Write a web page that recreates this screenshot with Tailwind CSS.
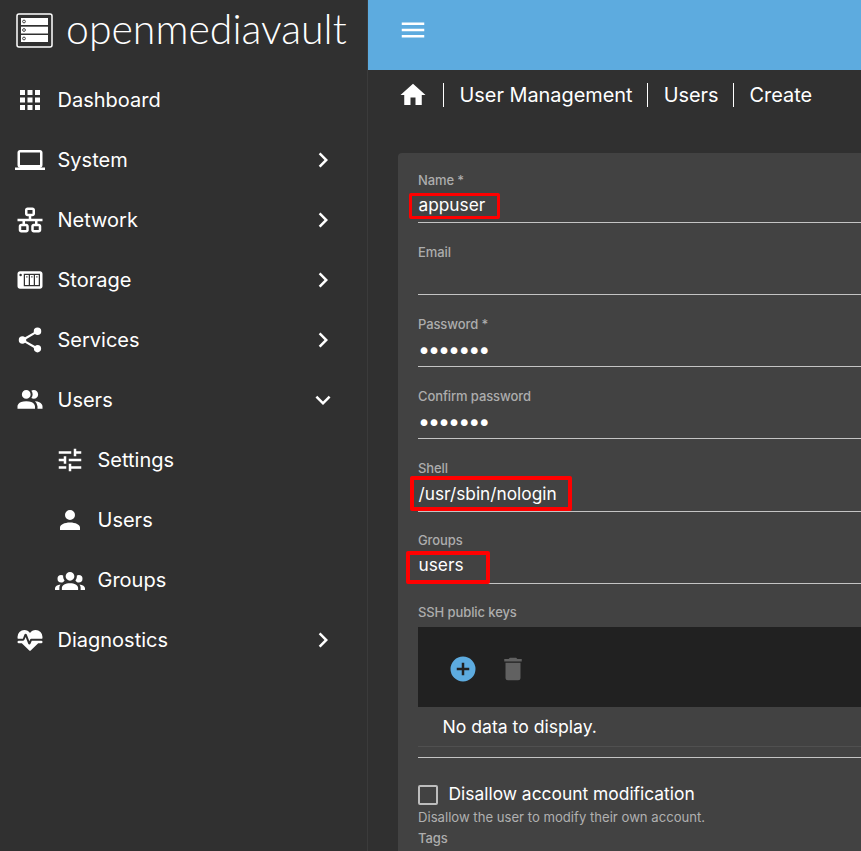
<!DOCTYPE html>
<html lang="en">
<head>
<meta charset="utf-8">
<title>openmediavault</title>
<script src="https://cdn.jsdelivr.net/npm/@tailwindcss/browser@4"></script>
</head>
<body class="bg-[#303030] font-['Inter','Liberation_Sans',sans-serif] text-white">
<div class="flex h-[851px] w-[861px] overflow-hidden">
  <aside class="w-[368px] shrink-0 border-r border-[#3b3b3b] bg-[#303030]">
    <div class="flex h-[70px] items-start pl-[16px] pt-[13px]">
      <svg class="h-[35px] w-[37px] shrink-0" viewBox="0 0 37 35">
        <rect x="1" y="1" width="35" height="33" rx="2" fill="none" stroke="#fff" stroke-width="1.5"/>
        <rect x="5" y="5" width="27" height="7" fill="#fff"/><rect x="5" y="13.7" width="27" height="6.8" fill="#fff"/><rect x="5" y="22" width="27" height="7" fill="#fff"/>
        <circle cx="8" cy="8.5" r="1.4" fill="#fff" stroke="#303030" stroke-width="0.9"/><circle cx="8" cy="17" r="1.4" fill="#fff" stroke="#303030" stroke-width="0.9"/><circle cx="8" cy="25.5" r="1.4" fill="#fff" stroke="#303030" stroke-width="0.9"/>
      </svg>
      <span class="ml-[13px] font-['Lato',sans-serif] text-[41px] font-light leading-[31px]">openmediavault</span>
    </div>
    <nav class="text-[20px]">
      <a class="flex h-[60px] items-center pl-[15px]"><svg class="h-[30px] w-[30px] fill-white" viewBox="0 0 24 24"><path d="M4,8H8V4H4V8M10,20H14V16H10V20M4,20H8V16H4V20M4,14H8V10H4V14M10,14H14V10H10V14M16,4V8H20V4H16M10,8H14V4H10V8M16,14H20V10H16V14M16,20H20V16H16V20Z"/></svg><span class="ml-[12.5px]">Dashboard</span></a>
      <a class="flex h-[60px] items-center pl-[15px] pr-[29px]"><svg class="h-[30px] w-[30px] fill-white" viewBox="0 0 24 24"><path d="M4,6H20V16H4M20,18A2,2 0 0,0 22,16V6C22,4.89 21.1,4 20,4H4C2.89,4 2,4.89 2,6V16A2,2 0 0,0 4,18H0V20H24V18H20Z"/></svg><span class="ml-[12.5px] flex-1">System</span><svg class="h-[30px] w-[30px] fill-white" viewBox="0 0 24 24"><path d="M8.59,16.58L13.17,12L8.59,7.41L10,6L16,12L10,18L8.59,16.58Z"/></svg></a>
      <a class="flex h-[60px] items-center pl-[15px] pr-[29px]"><svg class="h-[30px] w-[30px] fill-white" viewBox="0 0 24 24"><path d="M10,2C8.89,2 8,2.89 8,4V7C8,8.11 8.89,9 10,9H11V11H2V13H6V15H5C3.89,15 3,15.89 3,17V20C3,21.11 3.89,22 5,22H9C10.11,22 11,21.11 11,20V17C11,15.89 10.11,15 9,15H8V13H16V15H15C13.89,15 13,15.89 13,17V20C13,21.11 13.89,22 15,22H19C20.11,22 21,21.11 21,20V17C21,15.89 20.11,15 19,15H18V13H22V11H13V9H14C15.11,9 16,8.11 16,7V4C16,2.89 15.11,2 14,2H10M10,4H14V7H10V4M5,17H9V20H5V17M15,17H19V20H15V17Z"/></svg><span class="ml-[12.5px] flex-1">Network</span><svg class="h-[30px] w-[30px] fill-white" viewBox="0 0 24 24"><path d="M8.59,16.58L13.17,12L8.59,7.41L10,6L16,12L10,18L8.59,16.58Z"/></svg></a>
      <a class="flex h-[60px] items-center pl-[15px] pr-[29px]"><svg class="h-[30px] w-[30px] fill-white" viewBox="0 0 24 24"><path d="M4,5C2.89,5 2,5.89 2,7V17C2,18.11 2.89,19 4,19H20C21.11,19 22,18.11 22,17V7C22,5.89 21.11,5 20,5H4M4.5,7A1,1 0 0,1 5.5,8A1,1 0 0,1 4.5,9A1,1 0 0,1 3.5,8A1,1 0 0,1 4.5,7M7,7H20V17H7V7M8,8V16H11V8H8M9,9H10V10H9V9M12,8V16H15V8H12M13,9H14V10H13V9M16,8V16H19V8H16M17,9H18V10H17V9Z"/></svg><span class="ml-[12.5px] flex-1">Storage</span><svg class="h-[30px] w-[30px] fill-white" viewBox="0 0 24 24"><path d="M8.59,16.58L13.17,12L8.59,7.41L10,6L16,12L10,18L8.59,16.58Z"/></svg></a>
      <a class="flex h-[60px] items-center pl-[15px] pr-[29px]"><svg class="h-[30px] w-[30px] fill-white" viewBox="0 0 24 24"><path d="M18,16.08C17.24,16.08 16.56,16.38 16.04,16.85L8.91,12.7C8.96,12.47 9,12.24 9,12C9,11.76 8.96,11.53 8.91,11.3L15.96,7.19C16.5,7.69 17.21,8 18,8A3,3 0 0,0 21,5A3,3 0 0,0 18,2A3,3 0 0,0 15,5C15,5.24 15.04,5.47 15.09,5.7L8.04,9.81C7.5,9.31 6.79,9 6,9A3,3 0 0,0 3,12A3,3 0 0,0 6,15C6.79,15 7.5,14.69 8.04,14.19L15.16,18.34C15.11,18.55 15.08,18.77 15.08,19C15.08,20.61 16.39,21.91 18,21.91C19.61,21.91 20.92,20.61 20.92,19A2.92,2.92 0 0,0 18,16.08Z"/></svg><span class="ml-[12.5px] flex-1">Services</span><svg class="h-[30px] w-[30px] fill-white" viewBox="0 0 24 24"><path d="M8.59,16.58L13.17,12L8.59,7.41L10,6L16,12L10,18L8.59,16.58Z"/></svg></a>
      <a class="flex h-[60px] items-center pl-[15px] pr-[29px]"><svg class="h-[30px] w-[30px] fill-white" viewBox="0 0 24 24"><path d="M16 17V19H2V17S2 13 9 13 16 17 16 17M12.5 7.5A3.5 3.5 0 1 0 9 11A3.5 3.5 0 0 0 12.5 7.5M15.94 13A5.32 5.32 0 0 1 18 17V19H22V17S22 13.37 15.94 13M15 4A3.39 3.39 0 0 0 13.07 4.59A5 5 0 0 1 13.07 10.41A3.39 3.39 0 0 0 15 11A3.5 3.5 0 0 0 15 4Z"/></svg><span class="ml-[12.5px] flex-1">Users</span><svg class="h-[30px] w-[30px] fill-white" viewBox="0 0 24 24"><path d="M7.41,8.58L12,13.17L16.59,8.58L18,10L12,16L6,10L7.41,8.58Z"/></svg></a>
      <a class="flex h-[60px] items-center pl-[55px]"><svg class="h-[30px] w-[30px] fill-white" viewBox="0 0 24 24"><path d="M3,17V19H9V17H3M3,5V7H13V5H3M13,21V19H21V17H13V15H11V21H13M7,9V11H3V13H7V15H9V9H7M21,13V11H11V13H21M15,9H17V7H21V5H17V3H15V9Z"/></svg><span class="ml-[12.5px]">Settings</span></a>
      <a class="flex h-[60px] items-center pl-[55px]"><svg class="h-[30px] w-[30px] fill-white" viewBox="0 0 24 24"><path d="M12,4A4,4 0 0,1 16,8A4,4 0 0,1 12,12A4,4 0 0,1 8,8A4,4 0 0,1 12,4M12,14C16.42,14 20,15.79 20,18V20H4V18C4,15.79 7.58,14 12,14Z"/></svg><span class="ml-[12.5px]">Users</span></a>
      <a class="flex h-[60px] items-center pl-[55px]"><svg class="h-[30px] w-[30px] fill-white" viewBox="0 0 24 24"><path d="M12,5.5A3.5,3.5 0 0,1 15.5,9A3.5,3.5 0 0,1 12,12.5A3.5,3.5 0 0,1 8.5,9A3.5,3.5 0 0,1 12,5.5M5,8C5.56,8 6.08,8.15 6.53,8.42C6.38,9.85 6.8,11.27 7.66,12.38C7.16,13.34 6.16,14 5,14A3,3 0 0,1 2,11A3,3 0 0,1 5,8M19,8A3,3 0 0,1 22,11A3,3 0 0,1 19,14C17.84,14 16.84,13.34 16.34,12.38C17.2,11.27 17.62,9.85 17.47,8.42C17.92,8.15 18.44,8 19,8M5.5,18.25C5.5,16.18 8.41,14.5 12,14.5C15.59,14.5 18.5,16.18 18.5,18.25V20H5.5V18.25M0,20V18.5C0,17.11 1.89,15.94 4.45,15.6C3.86,16.28 3.5,17.22 3.5,18.25V20H0M24,20H20.5V18.25C20.5,17.22 20.14,16.28 19.55,15.6C22.11,15.94 24,17.11 24,18.5V20Z"/></svg><span class="ml-[12.5px]">Groups</span></a>
      <a class="flex h-[60px] items-center pl-[15px] pr-[29px]"><svg class="h-[30px] w-[30px] fill-white" viewBox="0 0 24 24"><path d="M7.5,4A5.5,5.5 0 0,0 2,9.5C2,10 2.09,10.5 2.22,11H6.3L7.57,7.63C7.87,6.83 9.05,6.75 9.43,7.63L11.5,13L12.09,11.58C12.22,11.25 12.57,11 13,11H21.78C21.91,10.5 22,10 22,9.5A5.5,5.5 0 0,0 16.5,4C14.64,4 13,4.93 12,6.34C11,4.93 9.36,4 7.5,4V4M3,12.5A1,1 0 0,0 2,13.5A1,1 0 0,0 3,14.5H5.44L11,20C12,20.9 12,20.9 13,20L18.56,14.5H21A1,1 0 0,0 22,13.5A1,1 0 0,0 21,12.5H13.4L12.47,14.8C12.07,15.81 10.92,15.85 10.5,14.83L8.5,9.5L7.54,11.83C7.39,12.21 7.05,12.5 6.6,12.5H3Z"/></svg><span class="ml-[12.5px] flex-1">Diagnostics</span><svg class="h-[30px] w-[30px] fill-white" viewBox="0 0 24 24"><path d="M8.59,16.58L13.17,12L8.59,7.41L10,6L16,12L10,18L8.59,16.58Z"/></svg></a>
    </nav>
  </aside>

  <main class="flex min-w-0 flex-1 flex-col">
    <header class="flex h-[70px] shrink-0 items-center bg-[#5dabdf] pb-[10px] pl-[30px]">
      <svg class="h-[30px] w-[30px] fill-white" viewBox="0 0 24 24"><path d="M3,6H21V8H3V6M3,11H21V13H3V11M3,16H21V18H3V16Z"/></svg>
    </header>
    <div class="flex h-[50px] shrink-0 items-center pl-[30px] text-[19.9px] leading-[24px]">
      <svg class="h-[30px] w-[30px] fill-white" viewBox="0 0 24 24"><path d="M10,20V14H14V20H19V12H22L12,3L2,12H5V20H10Z"/></svg>
      <span class="ml-[15px] h-[24px] border-l border-white"></span>
      <span class="ml-[15.5px]">User Management</span>
      <span class="ml-[14.5px] h-[24px] border-l border-white"></span>
      <span class="ml-[15.5px]">Users</span>
      <span class="ml-[14.5px] h-[24px] border-l border-white"></span>
      <span class="ml-[15.5px]">Create</span>
    </div>
    <section class="ml-[30px] mt-[33px] flex-1 rounded-tl-[4px] bg-[#424242] pl-[20px]">
      <div class="relative flex h-[70px] flex-col justify-end border-b border-[#c4c4c4] pb-[5px]">
        <label class="mb-[5px] text-[13px] font-medium leading-[16px] tracking-[-0.1px] text-[#adadad]">Name *</label>
        <div class="pl-[0.5px] text-[17.3px] leading-[24px]">appuser</div>
        <div class="absolute left-[-9px] top-[40px] h-[26px] w-[91px] rounded-[2px] border-[3px] border-[#ff0000]"></div>
      </div>
      <div class="flex h-[72px] flex-col justify-end border-b border-[#c4c4c4] pb-[5px]">
        <label class="mb-[5px] text-[13px] font-medium leading-[16px] tracking-[-0.1px] text-[#adadad]">Email</label>
        <div class="h-[24px]"></div>
      </div>
      <div class="flex h-[72px] flex-col justify-end border-b border-[#c4c4c4] pb-[5px]">
        <label class="mb-[5px] text-[13px] font-medium leading-[16px] tracking-[-0.1px] text-[#adadad]">Password *</label>
        <div class="text-[21.4px] leading-[24px] tracking-[-2px]">•••••••</div>
      </div>
      <div class="flex h-[72px] flex-col justify-end border-b border-[#c4c4c4] pb-[5px]">
        <label class="mb-[5px] text-[13px] font-medium leading-[16px] tracking-[-0.1px] text-[#adadad]">Confirm password</label>
        <div class="text-[21.4px] leading-[24px] tracking-[-2px]">•••••••</div>
      </div>
      <div class="relative flex h-[73px] flex-col justify-end border-b border-[#c4c4c4] pb-[5px]">
        <label class="mb-[6px] text-[13px] font-medium leading-[16px] tracking-[-0.1px] text-[#adadad]">Shell</label>
        <div class="pl-[0.5px] text-[17.3px] leading-[24px]">/usr/sbin/nologin</div>
        <div class="absolute left-[-8px] top-[37px] h-[35px] w-[162px] rounded-[2px] border-[4px] border-[#ff0000]"></div>
      </div>
      <div class="relative flex h-[72px] flex-col justify-end border-b border-[#c4c4c4] pb-[6px]">
        <label class="mb-[5px] text-[13px] font-medium leading-[16px] tracking-[-0.1px] text-[#adadad]">Groups</label>
        <div class="pl-[0.5px] text-[17.3px] leading-[24px]">users</div>
        <div class="absolute left-[-12px] top-[39px] h-[33px] w-[84px] rounded-[2px] border-[4px] border-[#ff0000]"></div>
      </div>
      <div class="h-[174px] border-b border-[#c4c4c4] pt-[20px]">
        <label class="block text-[13px] font-medium leading-[16px] tracking-[-0.1px] text-[#adadad]">SSH public keys</label>
        <div class="mt-[7px] flex h-[80px] items-center bg-[#212121] pl-[30px] pt-[4px]">
          <svg class="h-[30px] w-[30px] fill-[#5dabdf]" viewBox="0 0 24 24"><path d="M17,13H13V17H11V13H7V11H11V7H13V11H17M12,2A10,10 0 0,0 2,12A10,10 0 0,0 12,22A10,10 0 0,0 22,12A10,10 0 0,0 12,2Z"/></svg>
          <svg class="ml-[20px] h-[30px] w-[30px] fill-[#616161]" viewBox="0 0 24 24"><path d="M19,4H15.5L14.5,3H9.5L8.5,4H5V6H19M6,19A2,2 0 0,0 8,21H16A2,2 0 0,0 18,19V7H6V19Z"/></svg>
        </div>
        <div class="flex h-[40px] items-center border-b border-[#505050] pl-[24.5px] pt-[1px] text-[17.6px]">No data to display.</div>
      </div>
      <div class="mt-[25px] flex h-[22px] items-center">
        <span class="h-[20px] w-[20px] translate-y-[1px] rounded-[2px] border-2 border-[#bdbdbd]"></span>
        <span class="ml-[10.5px] text-[17.4px] leading-[22px]">Disallow account modification</span>
      </div>
      <p class="mt-[4px] text-[13.13px] leading-[16px] text-[#b0b0b0]">Disallow the user to modify their own account.</p>
      <label class="mt-[5px] block text-[13px] font-medium leading-[16px] tracking-[-0.1px] text-[#adadad]">Tags</label>
    </section>
  </main>
</div>
</body>
</html>
